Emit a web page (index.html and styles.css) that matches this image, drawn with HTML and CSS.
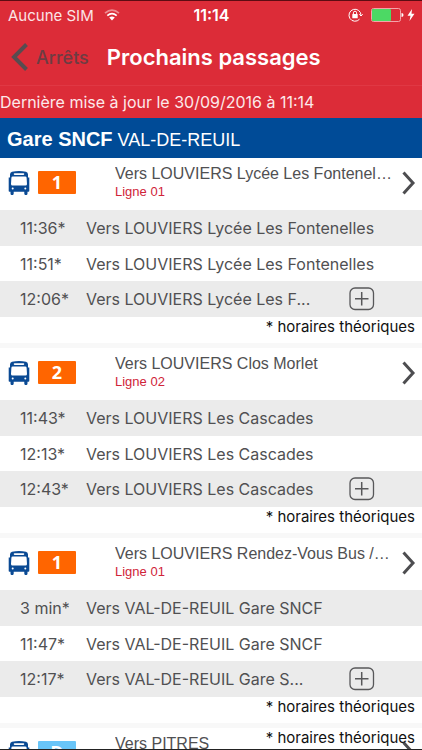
FILE: index.html
```html
<!DOCTYPE html>
<html lang="fr">
<head>
<meta charset="utf-8">
<meta name="viewport" content="width=device-width, initial-scale=1">
<title>Prochains passages</title>
<link rel="stylesheet" href="styles.css">
</head>
<body>
<svg class="symbols" aria-hidden="true">
  <symbol id="bus" viewBox="0 0 22 24">
    <path fill="#0a4a94" fill-rule="evenodd" d="M4 .8Q11-.6 18 .8Q20 1.300 20 3.500V6.500H21.300V20Q21.300 20.800 20.500 20.800H19.500V22.500a1.600 1.600 0 0 1-3.200 0V20.800H5.700V22.500a1.600 1.600 0 0 1-3.200 0V20.800H1.500Q.7 20.800 .7 20V6.500H2V3.500Q2 1.300 4 .8ZM6.500 2.300a.8.8 0 0 0 0 1.600H15.500a.8.8 0 0 0 0-1.600ZM4.800 5.400Q3.500 5.400 3.400 6.800L3 13Q3 14.600 4.400 14.600H17.600Q19 14.600 19 13L18.600 6.800Q18.500 5.400 17.200 5.400ZM4.700 16.600a1 1 0 1 0 0 2a1 1 0 1 0 0-2ZM17.300 16.600a1 1 0 1 0 0 2a1 1 0 1 0 0-2Z"/>
  </symbol>
  <symbol id="chevron" viewBox="0 0 14 24">
    <path fill="none" stroke="#4d4d50" stroke-width="3" d="M1.500 1.500L11 12L1.500 22.500"/>
  </symbol>
  <symbol id="plus" viewBox="0 0 26 24">
    <rect x="1" y="1" width="23.500" height="21.500" rx="5" fill="none" stroke="#58585a" stroke-width="1.300"/>
    <path stroke="#58585a" stroke-width="1.500" d="M6 11.800H19.500M12.700 5V18.500"/>
  </symbol>
</svg>
<div class="app">
  <header class="top">
    <div class="status">
      <div class="carrier">
        <span>Aucune SIM</span>
        <svg class="wifi" viewBox="0 0 16 12" aria-hidden="true">
          <g fill="none" stroke="#fff" stroke-width="1.700">
            <path opacity=".45" d="M1 4.200Q8-2 15 4.200"/>
            <path d="M3.300 6.600Q8 2.500 12.700 6.600"/>
          </g>
          <path fill="#fff" d="M5.200 8.600Q8 6.400 10.800 8.600L8 11.500Z"/>
        </svg>
      </div>
      <span class="clock">11:14</span>
      <div class="power">
        <svg class="lock" viewBox="0 0 15 14" aria-hidden="true">
          <path fill="none" stroke="#fff" stroke-width="1" d="M11.500 11.200A6 6 0 1 1 13 7.300M11.300 6.300L13 8L14.700 6.300"/>
          <rect x="4.300" y="6" width="5.400" height="4.200" rx=".5" fill="#fff"/>
          <path fill="none" stroke="#fff" stroke-width="1" d="M5.400 6V4.800a1.600 1.600 0 0 1 3.200 0V6"/>
        </svg>
        <svg class="battery" viewBox="0 0 33 14" aria-hidden="true">
          <rect x=".5" y=".5" width="29" height="13" rx="2" fill="none" stroke="#f4a4aa"/>
          <rect x="1" y="1" width="19" height="12" rx="1" fill="#4cd964"/>
          <path fill="#fff" d="M30.500 5Q32.500 5 32.500 7T30.500 9Z"/>
        </svg>
        <svg class="bolt" viewBox="0 0 8 12" aria-hidden="true"><path fill="#fff" d="M5 0L.5 6.800H3.500L2.500 12L7.500 4.800H4.500Z"/></svg>
      </div>
    </div>
    <nav class="nav">
      <a class="back" href="#">
        <svg viewBox="0 0 18 28" aria-hidden="true"><path fill="none" stroke="#574c50" stroke-width="4" d="M15.500 1.500L3 14L15.500 26.500"/></svg>
        <span>Arrêts</span>
      </a>
      <h1>Prochains passages</h1>
    </nav>
    <p class="updated">Dernière mise à jour le 30/09/2016 à 11:14</p>
  </header>
  <h2 class="stop"><strong>Gare SNCF</strong> VAL-DE-REUIL</h2>
  <main class="groups">
    <section class="group">
      <a class="line" href="#">
        <svg class="bus" aria-hidden="true"><use href="#bus"/></svg>
        <span class="badge">1</span>
        <span class="route"><span class="dest">Vers LOUVIERS Lycée Les Fontenel…</span><span class="number">Ligne 01</span></span>
        <svg class="chevron" aria-hidden="true"><use href="#chevron"/></svg>
      </a>
      <ul class="times">
        <li><time>11:36*</time><span class="to">Vers LOUVIERS Lycée Les Fontenelles</span></li>
        <li><time>11:51*</time><span class="to">Vers LOUVIERS Lycée Les Fontenelles</span></li>
        <li><time>12:06*</time><span class="to short">Vers LOUVIERS Lycée Les F...</span><button class="more" aria-label="Plus"><svg aria-hidden="true"><use href="#plus"/></svg></button></li>
      </ul>
      <p class="note">* horaires théoriques</p>
    </section>
    <section class="group">
      <a class="line" href="#">
        <svg class="bus" aria-hidden="true"><use href="#bus"/></svg>
        <span class="badge">2</span>
        <span class="route"><span class="dest">Vers LOUVIERS Clos Morlet</span><span class="number">Ligne 02</span></span>
        <svg class="chevron" aria-hidden="true"><use href="#chevron"/></svg>
      </a>
      <ul class="times">
        <li><time>11:43*</time><span class="to">Vers LOUVIERS Les Cascades</span></li>
        <li><time>12:13*</time><span class="to">Vers LOUVIERS Les Cascades</span></li>
        <li><time>12:43*</time><span class="to short">Vers LOUVIERS Les Cascades</span><button class="more" aria-label="Plus"><svg aria-hidden="true"><use href="#plus"/></svg></button></li>
      </ul>
      <p class="note">* horaires théoriques</p>
    </section>
    <section class="group">
      <a class="line" href="#">
        <svg class="bus" aria-hidden="true"><use href="#bus"/></svg>
        <span class="badge">1</span>
        <span class="route"><span class="dest">Vers LOUVIERS Rendez-Vous Bus /…</span><span class="number">Ligne 01</span></span>
        <svg class="chevron" aria-hidden="true"><use href="#chevron"/></svg>
      </a>
      <ul class="times">
        <li><time>3 min*</time><span class="to">Vers VAL-DE-REUIL Gare SNCF</span></li>
        <li><time>11:47*</time><span class="to">Vers VAL-DE-REUIL Gare SNCF</span></li>
        <li><time>12:17*</time><span class="to short">Vers VAL-DE-REUIL Gare S...</span><button class="more" aria-label="Plus"><svg aria-hidden="true"><use href="#plus"/></svg></button></li>
      </ul>
      <p class="note">* horaires théoriques</p>
    </section>
    <section class="group">
      <a class="line" href="#">
        <svg class="bus" aria-hidden="true"><use href="#bus"/></svg>
        <span class="badge sky">D</span>
        <span class="route"><span class="dest">Vers PITRES</span></span>
        <svg class="chevron" aria-hidden="true"><use href="#chevron"/></svg>
      </a>
    </section>
  </main>
  <p class="legend">* horaires théoriques</p>
</div>
</body>
</html>
```
FILE: styles.css
```css
* { box-sizing: border-box; }
body, h1, h2, p, ul { margin: 0; padding: 0; }
body {
  font-family: Inter, "Liberation Sans", sans-serif;
  color: #505052;
  background: #fff;
}
a { color: inherit; text-decoration: none; }
.symbols { position: absolute; width: 0; height: 0; }
.app {
  position: relative;
  display: flex;
  flex-direction: column;
  height: 100vh;
  overflow: hidden;
  border-top: 1px solid #5c0c12;
  border-bottom: 1px solid #222;
}
.top { flex: none; background: #dc2c38; color: #fff; }
.status {
  display: grid;
  grid-template-columns: 1fr auto 1fr;
  align-items: center;
  height: 28px;
  padding: 0 7px 0 8px;
  font-size: 15px;
}
.carrier, .power { display: flex; align-items: center; }
.carrier { gap: 10px; color: #fbe4e6; }
.clock { font-size: 16px; font-weight: 600; }
.power { justify-content: flex-end; }
.wifi { width: 16px; height: 12px; }
.lock { width: 15px; height: 14px; margin-right: 8px; }
.battery { width: 33px; height: 14px; margin-right: 3px; }
.bolt { width: 8px; height: 12px; }
.nav {
  display: flex;
  align-items: center;
  gap: 18px;
  height: 56px;
  padding-left: 11px;
}
.back {
  display: flex;
  align-items: center;
  gap: 7px;
  color: #6d3c43;
  font-size: 18px;
  font-weight: 500;
}
.back svg { width: 18px; height: 28px; }
.nav h1 { font-size: 22px; font-weight: 600; white-space: nowrap; }
.updated {
  height: 33px;
  border-top: 1px solid #e03844;
  font-size: 16px;
  line-height: 32px;
  color: #fde9ea;
}
.stop {
  flex: none;
  height: 40px;
  padding-left: 7px;
  background: #004b97;
  color: #fff;
  font: 18px/42px "Liberation Sans", sans-serif;
}
.stop strong { font-size: 20px; }
.groups { flex: 1; min-height: 0; overflow: hidden; }
.group { border-bottom: 5px solid #f8f8f8; }
.line {
  display: flex;
  align-items: flex-start;
  height: 52px;
  padding: 6px 6px 0 8px;
  font-family: "Liberation Sans", sans-serif;
}
.bus { flex: none; width: 22px; height: 24px; margin: 7px 8px 0 0; }
.badge {
  flex: none;
  width: 38px;
  height: 23px;
  margin: 7px 39px 0 0;
  border-radius: 1px;
  background: #ff6500;
  color: #fff;
  font: 700 18px/23px "Open Sans", sans-serif;
  text-align: center;
}
.badge.sky { background: #69c5f8; }
.route { flex: 1; min-width: 0; }
.dest, .number { display: block; }
.dest {
  overflow: hidden;
  font-size: 16px;
  line-height: 20px;
  white-space: nowrap;
  text-overflow: ellipsis;
}
.number { color: #d02439; font-size: 13px; line-height: 16px; }
.chevron { flex: none; width: 14px; height: 24px; margin: 7px 0 0 2px; }
.times { list-style: none; }
.times li {
  display: flex;
  align-items: center;
  height: 36px;
  padding-left: 20px;
  font-size: 16px;
}
.times li:nth-child(odd) { background: #ebebeb; }
.times li:nth-child(even) { height: 35px; }
time { flex: none; width: 66px; }
.to { white-space: nowrap; }
.short { width: 263px; }
.more {
  display: flex;
  padding: 0;
  border: 0;
  background: none;
}
.more svg { width: 26px; height: 24px; }
.note, .legend {
  color: #111;
  font-size: 15px;
  line-height: 20px;
  text-align: right;
}
.note { height: 26px; padding-right: 7px; }
.legend { position: absolute; right: 7px; bottom: 1px; }
```
